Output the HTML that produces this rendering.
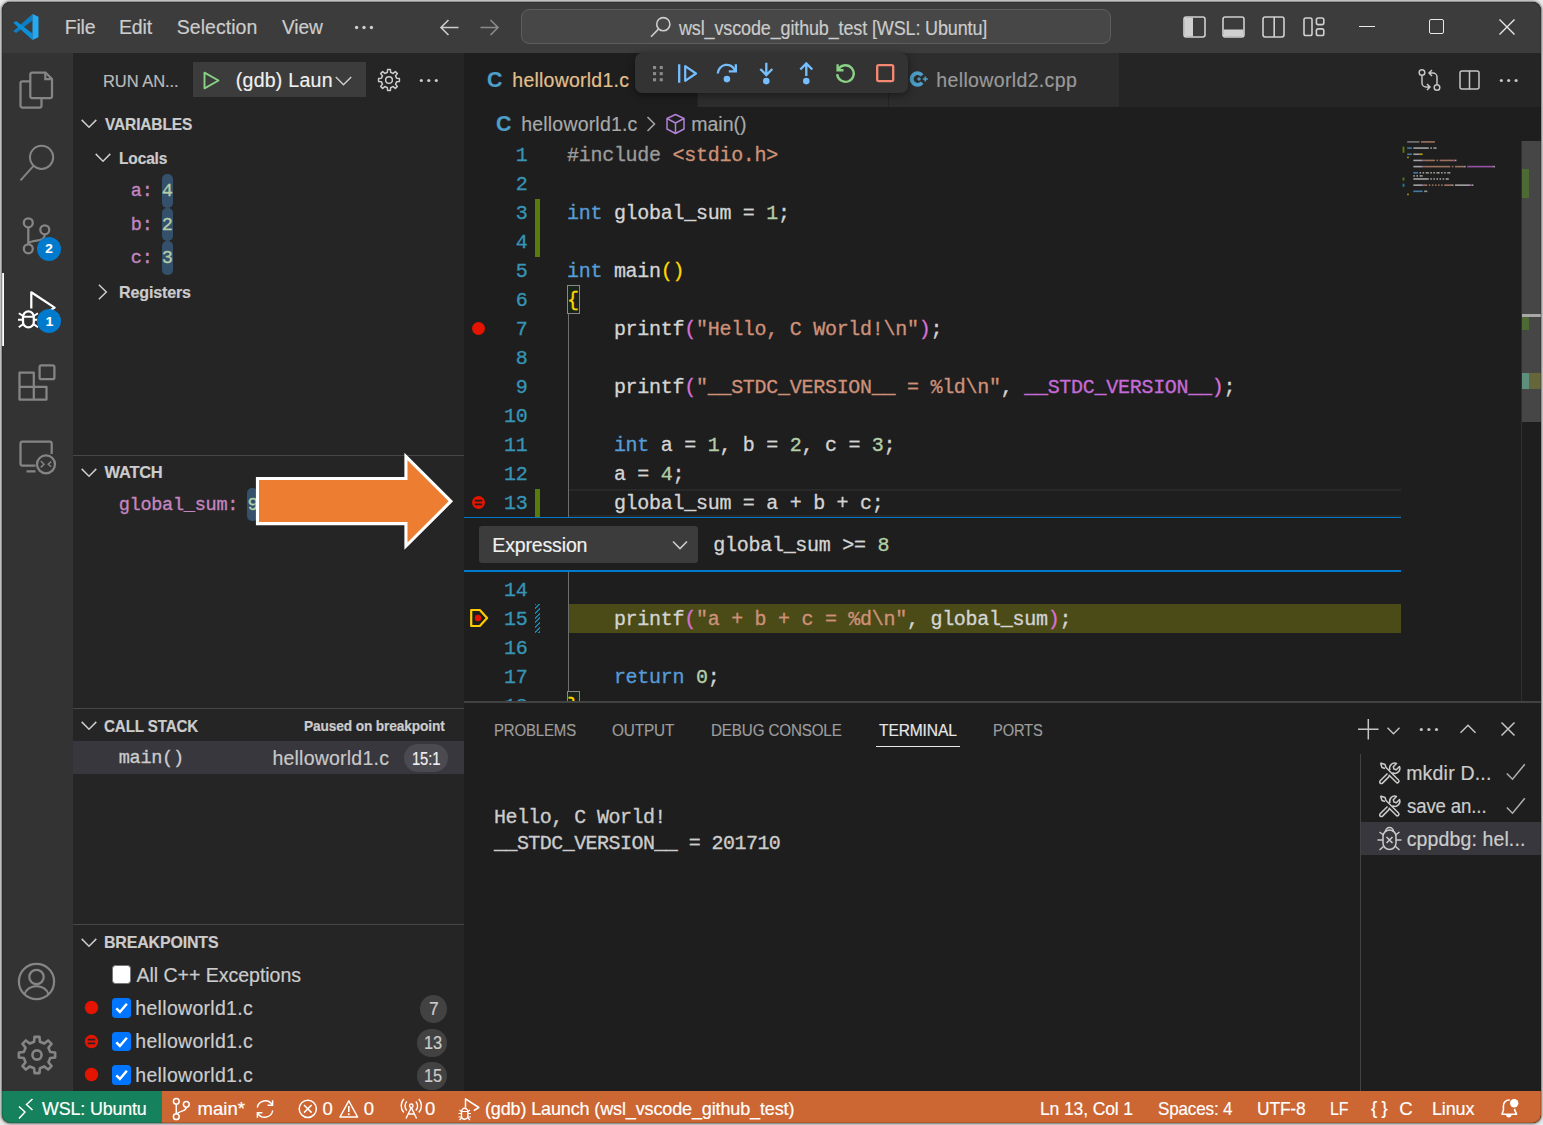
<!DOCTYPE html>
<html><head><meta charset="utf-8"><title>VS Code</title>
<style>
html,body{margin:0;padding:0;}
body{width:1543px;height:1125px;overflow:hidden;background:#e9e9e9;position:relative;font-family:'Liberation Sans', sans-serif;}
#frame{position:absolute;left:2px;top:2px;width:1539px;height:1121px;border-radius:8.5px;overflow:hidden;box-shadow:0 0 2.5px 0.5px rgba(0,0,0,0.55);background:#1e1e1e;}
#win{position:absolute;left:-2px;top:-2px;width:1543px;height:1125px;}
#edge{position:absolute;left:2px;top:2px;width:1539px;height:1121px;border-radius:8.5px;box-sizing:border-box;border:1px solid rgba(0,0,0,0.13);pointer-events:none;}
#win div,#win span,#win svg,#win pre{position:absolute;margin:0;padding:0;white-space:pre;}
#win svg{overflow:visible;}
.code{font-family:'Liberation Mono', monospace;-webkit-text-stroke:0.32px currentColor;}
#win span{-webkit-text-stroke:0.18px currentColor;}
#win .code span{-webkit-text-stroke:inherit;}
</style></head><body>
<div id="frame"><div id="win">
<div style="left:0px;top:0px;width:1543px;height:1125px;background:#1e1e1e;"></div>
<div style="left:0px;top:0px;width:1543px;height:53px;background:#3c3c3c;"></div>
<div style="left:0px;top:53px;width:73px;height:1038px;background:#333333;"></div>
<div style="left:73px;top:53px;width:390.6px;height:1038px;background:#252526;"></div>
<div style="left:464px;top:53px;width:1079px;height:53.5px;background:#252526;"></div>
<div style="left:464px;top:53px;width:232.5px;height:53.5px;background:#1e1e1e;"></div>
<div style="left:697.5px;top:53px;width:190px;height:53.5px;background:#2d2d2d;"></div>
<div style="left:888.5px;top:53px;width:230.5px;height:53.5px;background:#2d2d2d;"></div>
<div style="left:0px;top:1091.4px;width:1543px;height:33.6px;background:#cc6633;"></div>
<div style="left:0px;top:1091.4px;width:161.8px;height:33.6px;background:#16825d;"></div>
<div style="left:568px;top:488.5px;width:833px;height:28.1px;background:transparent;border-top:2px solid #282828;border-bottom:2px solid #282828;box-sizing:border-box;"></div>
<div style="left:568px;top:603.7px;width:833px;height:28.9px;background:#4b4b18;"></div>
<div style="left:567.8px;top:314px;width:1.3px;height:203px;background:#6e6e6e;"></div>
<div style="left:567.8px;top:572px;width:1.3px;height:119px;background:#6e6e6e;"></div>
<div style="left:567px;top:285px;width:12.5px;height:29px;background:rgba(0,100,0,0.1);border:1px solid #888;box-sizing:border-box;"></div>
<div style="left:567px;top:691px;width:12.5px;height:29px;background:rgba(0,100,0,0.1);border:1px solid #888;box-sizing:border-box;"></div>
<div style="left:535.3px;top:199px;width:4.5px;height:57.5px;background:#587c0c;"></div>
<div style="left:535.3px;top:488.5px;width:4.5px;height:28.5px;background:#587c0c;"></div>
<div style="left:535.3px;top:603.7px;width:4.5px;height:28.9px;background:transparent;background:repeating-linear-gradient(-45deg,#1b81a8 0,#1b81a8 1.5px,transparent 1.5px,transparent 3.3px);"></div>
<pre class="code" style="left:515.68px;top:141.30px;height:29.0px;line-height:29.0px;font-size:20.0px;letter-spacing:-0.280px;color:#3794b5">1</pre>
<pre class="code" style="left:567.0px;top:141.30px;height:29.0px;line-height:29.0px;font-size:20.0px;letter-spacing:-0.280px;color:#d4d4d4"><span style="position:static;color:#9b9b9b;-webkit-text-stroke-color:#9b9b9b">#include</span><span style="position:static;color:#d4d4d4;-webkit-text-stroke-color:#d4d4d4"> </span><span style="position:static;color:#ce9178;-webkit-text-stroke-color:#ce9178">&lt;stdio.h&gt;</span></pre>
<pre class="code" style="left:515.68px;top:170.30px;height:29.0px;line-height:29.0px;font-size:20.0px;letter-spacing:-0.280px;color:#3794b5">2</pre>
<pre class="code" style="left:515.68px;top:199.30px;height:29.0px;line-height:29.0px;font-size:20.0px;letter-spacing:-0.280px;color:#3794b5">3</pre>
<pre class="code" style="left:567.0px;top:199.30px;height:29.0px;line-height:29.0px;font-size:20.0px;letter-spacing:-0.280px;color:#d4d4d4"><span style="position:static;color:#569cd6;-webkit-text-stroke-color:#569cd6">int</span><span style="position:static;color:#d4d4d4;-webkit-text-stroke-color:#d4d4d4"> global_sum = </span><span style="position:static;color:#b5cea8;-webkit-text-stroke-color:#b5cea8">1</span><span style="position:static;color:#d4d4d4;-webkit-text-stroke-color:#d4d4d4">;</span></pre>
<pre class="code" style="left:515.68px;top:228.30px;height:29.0px;line-height:29.0px;font-size:20.0px;letter-spacing:-0.280px;color:#3794b5">4</pre>
<pre class="code" style="left:515.68px;top:257.30px;height:29.0px;line-height:29.0px;font-size:20.0px;letter-spacing:-0.280px;color:#3794b5">5</pre>
<pre class="code" style="left:567.0px;top:257.30px;height:29.0px;line-height:29.0px;font-size:20.0px;letter-spacing:-0.280px;color:#d4d4d4"><span style="position:static;color:#569cd6;-webkit-text-stroke-color:#569cd6">int</span><span style="position:static;color:#d4d4d4;-webkit-text-stroke-color:#d4d4d4"> main</span><span style="position:static;color:#ffd700;-webkit-text-stroke-color:#ffd700">()</span></pre>
<pre class="code" style="left:515.68px;top:286.30px;height:29.0px;line-height:29.0px;font-size:20.0px;letter-spacing:-0.280px;color:#3794b5">6</pre>
<pre class="code" style="left:567.0px;top:286.30px;height:29.0px;line-height:29.0px;font-size:20.0px;letter-spacing:-0.280px;color:#d4d4d4"><span style="position:static;color:#ffd700;-webkit-text-stroke-color:#ffd700">{</span></pre>
<pre class="code" style="left:515.68px;top:315.30px;height:29.0px;line-height:29.0px;font-size:20.0px;letter-spacing:-0.280px;color:#3794b5">7</pre>
<pre class="code" style="left:567.0px;top:315.30px;height:29.0px;line-height:29.0px;font-size:20.0px;letter-spacing:-0.280px;color:#d4d4d4"><span style="position:static;color:#d4d4d4;-webkit-text-stroke-color:#d4d4d4">    printf</span><span style="position:static;color:#da70d6;-webkit-text-stroke-color:#da70d6">(</span><span style="position:static;color:#ce9178;-webkit-text-stroke-color:#ce9178">&quot;Hello, C World!\n&quot;</span><span style="position:static;color:#da70d6;-webkit-text-stroke-color:#da70d6">)</span><span style="position:static;color:#d4d4d4;-webkit-text-stroke-color:#d4d4d4">;</span></pre>
<pre class="code" style="left:515.68px;top:344.30px;height:29.0px;line-height:29.0px;font-size:20.0px;letter-spacing:-0.280px;color:#3794b5">8</pre>
<pre class="code" style="left:515.68px;top:373.30px;height:29.0px;line-height:29.0px;font-size:20.0px;letter-spacing:-0.280px;color:#3794b5">9</pre>
<pre class="code" style="left:567.0px;top:373.30px;height:29.0px;line-height:29.0px;font-size:20.0px;letter-spacing:-0.280px;color:#d4d4d4"><span style="position:static;color:#d4d4d4;-webkit-text-stroke-color:#d4d4d4">    printf</span><span style="position:static;color:#da70d6;-webkit-text-stroke-color:#da70d6">(</span><span style="position:static;color:#ce9178;-webkit-text-stroke-color:#ce9178">&quot;__STDC_VERSION__ = %ld\n&quot;</span><span style="position:static;color:#d4d4d4;-webkit-text-stroke-color:#d4d4d4">, </span><span style="position:static;color:#c56bd8;-webkit-text-stroke-color:#c56bd8">__STDC_VERSION__</span><span style="position:static;color:#da70d6;-webkit-text-stroke-color:#da70d6">)</span><span style="position:static;color:#d4d4d4;-webkit-text-stroke-color:#d4d4d4">;</span></pre>
<pre class="code" style="left:503.96px;top:402.30px;height:29.0px;line-height:29.0px;font-size:20.0px;letter-spacing:-0.280px;color:#3794b5">10</pre>
<pre class="code" style="left:503.96px;top:431.30px;height:29.0px;line-height:29.0px;font-size:20.0px;letter-spacing:-0.280px;color:#3794b5">11</pre>
<pre class="code" style="left:567.0px;top:431.30px;height:29.0px;line-height:29.0px;font-size:20.0px;letter-spacing:-0.280px;color:#d4d4d4"><span style="position:static;color:#d4d4d4;-webkit-text-stroke-color:#d4d4d4">    </span><span style="position:static;color:#569cd6;-webkit-text-stroke-color:#569cd6">int</span><span style="position:static;color:#d4d4d4;-webkit-text-stroke-color:#d4d4d4"> a = </span><span style="position:static;color:#b5cea8;-webkit-text-stroke-color:#b5cea8">1</span><span style="position:static;color:#d4d4d4;-webkit-text-stroke-color:#d4d4d4">, b = </span><span style="position:static;color:#b5cea8;-webkit-text-stroke-color:#b5cea8">2</span><span style="position:static;color:#d4d4d4;-webkit-text-stroke-color:#d4d4d4">, c = </span><span style="position:static;color:#b5cea8;-webkit-text-stroke-color:#b5cea8">3</span><span style="position:static;color:#d4d4d4;-webkit-text-stroke-color:#d4d4d4">;</span></pre>
<pre class="code" style="left:503.96px;top:460.30px;height:29.0px;line-height:29.0px;font-size:20.0px;letter-spacing:-0.280px;color:#3794b5">12</pre>
<pre class="code" style="left:567.0px;top:460.30px;height:29.0px;line-height:29.0px;font-size:20.0px;letter-spacing:-0.280px;color:#d4d4d4"><span style="position:static;color:#d4d4d4;-webkit-text-stroke-color:#d4d4d4">    a = </span><span style="position:static;color:#b5cea8;-webkit-text-stroke-color:#b5cea8">4</span><span style="position:static;color:#d4d4d4;-webkit-text-stroke-color:#d4d4d4">;</span></pre>
<pre class="code" style="left:503.96px;top:489.30px;height:29.0px;line-height:29.0px;font-size:20.0px;letter-spacing:-0.280px;color:#3794b5">13</pre>
<pre class="code" style="left:567.0px;top:489.30px;height:29.0px;line-height:29.0px;font-size:20.0px;letter-spacing:-0.280px;color:#d4d4d4"><span style="position:static;color:#d4d4d4;-webkit-text-stroke-color:#d4d4d4">    global_sum = a + b + c;</span></pre>
<pre class="code" style="left:503.96px;top:575.80px;height:29.0px;line-height:29.0px;font-size:20.0px;letter-spacing:-0.280px;color:#3794b5">14</pre>
<pre class="code" style="left:503.96px;top:604.80px;height:29.0px;line-height:29.0px;font-size:20.0px;letter-spacing:-0.280px;color:#3794b5">15</pre>
<pre class="code" style="left:567.0px;top:604.80px;height:29.0px;line-height:29.0px;font-size:20.0px;letter-spacing:-0.280px;color:#d4d4d4"><span style="position:static;color:#d4d4d4;-webkit-text-stroke-color:#d4d4d4">    printf</span><span style="position:static;color:#da70d6;-webkit-text-stroke-color:#da70d6">(</span><span style="position:static;color:#ce9178;-webkit-text-stroke-color:#ce9178">&quot;a + b + c = %d\n&quot;</span><span style="position:static;color:#d4d4d4;-webkit-text-stroke-color:#d4d4d4">, global_sum</span><span style="position:static;color:#da70d6;-webkit-text-stroke-color:#da70d6">)</span><span style="position:static;color:#d4d4d4;-webkit-text-stroke-color:#d4d4d4">;</span></pre>
<pre class="code" style="left:503.96px;top:633.80px;height:29.0px;line-height:29.0px;font-size:20.0px;letter-spacing:-0.280px;color:#3794b5">16</pre>
<pre class="code" style="left:503.96px;top:662.80px;height:29.0px;line-height:29.0px;font-size:20.0px;letter-spacing:-0.280px;color:#3794b5">17</pre>
<pre class="code" style="left:567.0px;top:662.80px;height:29.0px;line-height:29.0px;font-size:20.0px;letter-spacing:-0.280px;color:#d4d4d4"><span style="position:static;color:#d4d4d4;-webkit-text-stroke-color:#d4d4d4">    </span><span style="position:static;color:#569cd6;-webkit-text-stroke-color:#569cd6">return</span><span style="position:static;color:#d4d4d4;-webkit-text-stroke-color:#d4d4d4"> </span><span style="position:static;color:#b5cea8;-webkit-text-stroke-color:#b5cea8">0</span><span style="position:static;color:#d4d4d4;-webkit-text-stroke-color:#d4d4d4">;</span></pre>
<pre class="code" style="left:503.96px;top:691.80px;height:29.0px;line-height:29.0px;font-size:20.0px;letter-spacing:-0.280px;color:#3794b5">18</pre>
<pre class="code" style="left:567.0px;top:691.80px;height:29.0px;line-height:29.0px;font-size:20.0px;letter-spacing:-0.280px;color:#d4d4d4"><span style="position:static;color:#ffd700;-webkit-text-stroke-color:#ffd700">}</span></pre>
<svg style="left:471px;top:321px;" width="15" height="15" viewBox="0 0 15 15" fill="none"><circle cx="7.5" cy="7.5" r="6.5" fill="#e51400"/></svg>
<svg style="left:471px;top:495px;" width="15" height="15" viewBox="0 0 15 15" fill="none"><circle cx="7.5" cy="7.5" r="6.5" fill="#e51400"/><path d="M3.8 5.6h7.4M3.8 9.4h7.4" stroke="#1e1e1e" stroke-width="1.9"/></svg>
<svg style="left:469px;top:608px;" width="21" height="21" viewBox="0 0 21 21" fill="none"><path d="M2.200 2h8.600l7.300 8-7.300 8H2.200z" stroke="#ffcc00" stroke-width="2.200" stroke-linejoin="round"/><circle cx="9" cy="10" r="3.200" fill="#e51400"/></svg>
<div style="left:464px;top:517px;width:937px;height:54px;background:#1e1e1e;"></div>
<div style="left:464px;top:516.6px;width:937px;height:1.6px;background:#007acc;"></div>
<div style="left:464px;top:570px;width:937px;height:1.6px;background:#007acc;"></div>
<div style="left:479px;top:526.2px;width:219px;height:36.4px;background:#3c3c3c;border-radius:3px;"></div>
<span style="left:492.27px;top:532.30px;height:27px;line-height:27px;font-family:'Liberation Sans', sans-serif;font-size:19.5px;font-weight:400;color:#f0f0f0;letter-spacing:-0.140px;">Expression</span>
<svg style="left:672px;top:540px;" width="16" height="10" viewBox="0 0 16 10" fill="none"><path d="M1 1.5l7 7 7-7" stroke="#cccccc" stroke-width="1.6"/></svg>
<pre class="code" style="left:713.3px;top:530.6px;height:29.0px;line-height:29.0px;font-size:20.0px;letter-spacing:-0.280px;color:#d4d4d4">global_sum &gt;= <span style="position:static;color:#b5cea8;-webkit-text-stroke-color:#b5cea8">8</span></pre>
<div style="left:464px;top:701px;width:1079px;height:390px;background:#1e1e1e;"></div>
<div style="left:464px;top:701px;width:1079px;height:1.5px;background:#424242;"></div>
<span style="left:64.77px;top:14.00px;height:27px;line-height:27px;font-family:'Liberation Sans', sans-serif;font-size:19.5px;font-weight:400;color:#cccccc;letter-spacing:-0.225px;">File</span>
<span style="left:118.97px;top:14.00px;height:27px;line-height:27px;font-family:'Liberation Sans', sans-serif;font-size:19.5px;font-weight:400;color:#cccccc;letter-spacing:-0.122px;">Edit</span>
<span style="left:176.71px;top:14.00px;height:27px;line-height:27px;font-family:'Liberation Sans', sans-serif;font-size:19.5px;font-weight:400;color:#cccccc;letter-spacing:0.051px;">Selection</span>
<span style="left:281.51px;top:14.00px;height:27px;line-height:27px;font-family:'Liberation Sans', sans-serif;font-size:19.5px;font-weight:400;color:#cccccc;letter-spacing:-0.150px;transform:scaleX(0.9833);transform-origin:0 50%;">View</span>
<svg style="left:354px;top:25px;" width="20" height="5" viewBox="0 0 20 5" fill="none"><circle cx="2.6" cy="2.5" r="1.7" fill="#ccc"/><circle cx="10" cy="2.5" r="1.7" fill="#ccc"/><circle cx="17.4" cy="2.5" r="1.7" fill="#ccc"/></svg>
<svg style="left:439px;top:18px;" width="21" height="19" viewBox="0 0 21 19" fill="none"><path d="M19.5 9.5H2M9.5 2L2 9.5l7.5 7.5" stroke="#cccccc" stroke-width="1.6"/></svg>
<svg style="left:479px;top:18px;" width="21" height="19" viewBox="0 0 21 19" fill="none"><path d="M1.5 9.5H19M11.5 2l7.5 7.5-7.5 7.5" stroke="#8a8a8a" stroke-width="1.6"/></svg>
<div style="left:521px;top:8.8px;width:589.5px;height:35.4px;background:#474747;border:1px solid #5e5e5e;border-radius:8px;box-sizing:border-box;"></div>
<svg style="left:650px;top:16px;" width="22" height="22" viewBox="0 0 22 22" fill="none"><circle cx="13.3" cy="8.2" r="6.6" stroke="#cccccc" stroke-width="1.6"/><path d="M8.7 12.9L1 20.8" stroke="#cccccc" stroke-width="1.6"/></svg>
<span style="left:678.66px;top:14.70px;height:27px;line-height:27px;font-family:'Liberation Sans', sans-serif;font-size:19.5px;font-weight:400;color:#cccccc;letter-spacing:-0.150px;transform:scaleX(0.9231);transform-origin:0 50%;">wsl_vscode_github_test [WSL: Ubuntu]</span>
<svg style="left:1182.5px;top:16px;" width="23" height="22" viewBox="0 0 23 22" fill="none"><rect x="1" y="1" width="21" height="20" rx="2.2" stroke="#d0d0d0" stroke-width="1.6"/><path d="M1.5 1.5h8.5v19H1.5z" fill="#d0d0d0"/></svg>
<svg style="left:1221.7px;top:16px;" width="23" height="22" viewBox="0 0 23 22" fill="none"><rect x="1" y="1" width="21" height="20" rx="2.2" stroke="#d0d0d0" stroke-width="1.6"/><path d="M1.5 13.5h20v7h-20z" fill="#d0d0d0"/></svg>
<svg style="left:1261.5px;top:16px;" width="23" height="22" viewBox="0 0 23 22" fill="none"><rect x="1" y="1" width="21" height="20" rx="2.2" stroke="#d0d0d0" stroke-width="1.6"/><path d="M12.2 1v20" stroke="#d0d0d0" stroke-width="1.6"/></svg>
<svg style="left:1302.5px;top:17px;" width="22" height="20" viewBox="0 0 22 20" fill="none"><rect x="1" y="1" width="8" height="17.5" rx="1.8" stroke="#d0d0d0" stroke-width="1.6"/><rect x="13.4" y="1" width="7.4" height="6.6" rx="1.8" stroke="#d0d0d0" stroke-width="1.6"/><rect x="13.4" y="11.9" width="7.4" height="6.6" rx="1.8" stroke="#d0d0d0" stroke-width="1.6"/></svg>
<div style="left:1359.3px;top:25.6px;width:15.4px;height:1.4px;background:#e8e8e8;"></div>
<div style="left:1428.6px;top:19.4px;width:15.2px;height:14.8px;background:transparent;border:1.4px solid #e8e8e8;border-radius:2px;box-sizing:border-box;"></div>
<svg style="left:1498.6px;top:19px;" width="16" height="16" viewBox="0 0 16 16" fill="none"><path d="M0.5 0.5l15 15M15.5 0.5l-15 15" stroke="#e8e8e8" stroke-width="1.4"/></svg>
<span style="left:487.02px;top:64.60px;height:30px;line-height:30px;font-family:'Liberation Sans', sans-serif;font-size:21.3px;font-weight:700;color:#4d9fc8;letter-spacing:0.000px;">C</span>
<span style="left:512.35px;top:67.30px;height:27px;line-height:27px;font-family:'Liberation Sans', sans-serif;font-size:19.5px;font-weight:400;color:#e2c08d;letter-spacing:0.228px;">helloworld1.c</span>
<span style="left:936.35px;top:67.30px;height:27px;line-height:27px;font-family:'Liberation Sans', sans-serif;font-size:19.5px;font-weight:400;color:#9a9a9a;letter-spacing:0.351px;">helloworld2.cpp</span>
<svg style="left:909px;top:70px;" width="20" height="18" viewBox="0 0 20 18" fill="none"><path d="M13.100 5.400A5.850 5.850 0 1 0 13.100 12.600" stroke="#4d9fc8" stroke-width="3.900"/><path d="M8.300 9h3.400M10 7.300v3.400" stroke="#4d9fc8" stroke-width="1.300"/><path d="M13.800 9h5M16.300 6.500v5" stroke="#4d9fc8" stroke-width="1.600"/></svg>
<span style="left:496.02px;top:108.50px;height:30px;line-height:30px;font-family:'Liberation Sans', sans-serif;font-size:21.3px;font-weight:700;color:#4d9fc8;letter-spacing:0.000px;">C</span>
<span style="left:521.25px;top:110.50px;height:27px;line-height:27px;font-family:'Liberation Sans', sans-serif;font-size:19.5px;font-weight:400;color:#a9a9a9;letter-spacing:0.187px;">helloworld1.c</span>
<svg style="left:645.5px;top:116px;" width="10" height="16" viewBox="0 0 10 16" fill="none"><path d="M1.5 1l7 7-7 7" stroke="#a9a9a9" stroke-width="1.5"/></svg>
<svg style="left:664.5px;top:113px;" width="21" height="22" viewBox="0 0 21 22" fill="none"><path d="M10.5 1.5l8.5 4v10.5l-8.5 4.5-8.5-4.5V5.5z M2 5.5l8.500 4.5 8.500-4.500 M10.5 10v10.5" stroke="#b180d7" stroke-width="1.5" stroke-linejoin="round"/></svg>
<span style="left:691.18px;top:110.50px;height:27px;line-height:27px;font-family:'Liberation Sans', sans-serif;font-size:19.5px;font-weight:400;color:#a9a9a9;letter-spacing:0.020px;">main()</span>
<svg style="left:1418px;top:68px;" width="23" height="24" viewBox="0 0 23 24" fill="none"><circle cx="4" cy="4.500" r="2.8" stroke="#c5c5c5" stroke-width="1.5"/><circle cx="19" cy="19.5" r="2.8" stroke="#c5c5c5" stroke-width="1.5"/><path d="M4 7.500v7.500a4 4 0 0 0 4 4h3.500M9 16l3 3-3 3M19 16.500V9a4 4 0 0 0-4-4h-3.500M14 8l-3-3 3-3" stroke="#c5c5c5" stroke-width="1.5"/></svg>
<svg style="left:1459px;top:70px;" width="21" height="20" viewBox="0 0 21 20" fill="none"><rect x="1" y="1" width="19" height="18" rx="2" stroke="#c5c5c5" stroke-width="1.5"/><path d="M10.5 1v18" stroke="#c5c5c5" stroke-width="1.5"/></svg>
<svg style="left:1498.5px;top:78px;" width="20" height="5" viewBox="0 0 20 5" fill="none"><circle cx="2.300" cy="2.500" r="1.6" fill="#c5c5c5"/><circle cx="9.7" cy="2.500" r="1.6" fill="#c5c5c5"/><circle cx="17.100" cy="2.500" r="1.6" fill="#c5c5c5"/></svg>
<span style="left:493.57px;top:718.50px;height:23px;line-height:23px;font-family:'Liberation Sans', sans-serif;font-size:16.5px;font-weight:400;color:#9d9d9d;letter-spacing:-0.150px;transform:scaleX(0.9064);transform-origin:0 50%;">PROBLEMS</span>
<span style="left:612.33px;top:718.50px;height:23px;line-height:23px;font-family:'Liberation Sans', sans-serif;font-size:16.5px;font-weight:400;color:#9d9d9d;letter-spacing:-0.150px;transform:scaleX(0.9284);transform-origin:0 50%;">OUTPUT</span>
<span style="left:711.26px;top:718.50px;height:23px;line-height:23px;font-family:'Liberation Sans', sans-serif;font-size:16.5px;font-weight:400;color:#9d9d9d;letter-spacing:-0.150px;transform:scaleX(0.9202);transform-origin:0 50%;">DEBUG CONSOLE</span>
<span style="left:879.36px;top:718.50px;height:23px;line-height:23px;font-family:'Liberation Sans', sans-serif;font-size:16.5px;font-weight:400;color:#e7e7e7;letter-spacing:-0.150px;transform:scaleX(0.9451);transform-origin:0 50%;">TERMINAL</span>
<span style="left:992.80px;top:718.50px;height:23px;line-height:23px;font-family:'Liberation Sans', sans-serif;font-size:16.5px;font-weight:400;color:#9d9d9d;letter-spacing:-0.150px;transform:scaleX(0.8874);transform-origin:0 50%;">PORTS</span>
<div style="left:876.1px;top:745.6px;width:83.6px;height:1.6px;background:#e7e7e7;"></div>
<pre class="code" style="left:494px;top:805.4px;height:25.3px;line-height:25.3px;font-size:20.0px;letter-spacing:-0.550px;color:#cccccc">Hello, C World!
__STDC_VERSION__ = 201710</pre>
<svg style="left:1358px;top:718.7px;" width="21" height="21" viewBox="0 0 21 21" fill="none"><path d="M10.300 0v20.500M0 10.200h20.500" stroke="#c5c5c5" stroke-width="1.5"/></svg>
<svg style="left:1387.3px;top:726.5px;" width="13" height="8" viewBox="0 0 13 8" fill="none"><path d="M0.500 0.700l6 6 6-6" stroke="#c5c5c5" stroke-width="1.4"/></svg>
<svg style="left:1418.6px;top:726.7px;" width="20" height="5" viewBox="0 0 20 5" fill="none"><circle cx="2.300" cy="2.500" r="1.6" fill="#c5c5c5"/><circle cx="9.900" cy="2.500" r="1.6" fill="#c5c5c5"/><circle cx="17.500" cy="2.500" r="1.6" fill="#c5c5c5"/></svg>
<svg style="left:1460.3px;top:723.5px;" width="16" height="10" viewBox="0 0 16 10" fill="none"><path d="M0.500 8.800l7.500-7.500 7.500 7.500" stroke="#c5c5c5" stroke-width="1.5"/></svg>
<svg style="left:1501px;top:722.3px;" width="14" height="14" viewBox="0 0 14 14" fill="none"><path d="M0.500 0.500l13 13M13.500 0.500l-13 13" stroke="#c5c5c5" stroke-width="1.5"/></svg>
<div style="left:1360.4px;top:754.4px;width:1px;height:336.6px;background:#424242;"></div>
<div style="left:1361.4px;top:822px;width:181.6px;height:33px;background:#37373d;"></div>
<span style="left:1406.18px;top:759.50px;height:27px;line-height:27px;font-family:'Liberation Sans', sans-serif;font-size:19.5px;font-weight:400;color:#cccccc;letter-spacing:0.197px;">mkdir D...</span>
<span style="left:1406.84px;top:793.10px;height:27px;line-height:27px;font-family:'Liberation Sans', sans-serif;font-size:19.5px;font-weight:400;color:#cccccc;letter-spacing:-0.150px;transform:scaleX(0.9566);transform-origin:0 50%;">save an...</span>
<span style="left:1406.75px;top:826.30px;height:27px;line-height:27px;font-family:'Liberation Sans', sans-serif;font-size:19.5px;font-weight:400;color:#cccccc;letter-spacing:0.117px;">cppdbg: hel...</span>
<span style="left:42.28px;top:1096.10px;height:26px;line-height:26px;font-family:'Liberation Sans', sans-serif;font-size:18.5px;font-weight:400;color:#ffffff;letter-spacing:-0.150px;transform:scaleX(0.9651);transform-origin:0 50%;">WSL: Ubuntu</span>
<span style="left:197.45px;top:1096.10px;height:26px;line-height:26px;font-family:'Liberation Sans', sans-serif;font-size:18.5px;font-weight:400;color:#ffffff;letter-spacing:0.062px;">main*</span>
<span style="left:322.41px;top:1096.10px;height:26px;line-height:26px;font-family:'Liberation Sans', sans-serif;font-size:18.5px;font-weight:400;color:#ffffff;letter-spacing:0.000px;">0</span>
<span style="left:363.81px;top:1096.10px;height:26px;line-height:26px;font-family:'Liberation Sans', sans-serif;font-size:18.5px;font-weight:400;color:#ffffff;letter-spacing:0.000px;">0</span>
<span style="left:425.01px;top:1096.10px;height:26px;line-height:26px;font-family:'Liberation Sans', sans-serif;font-size:18.5px;font-weight:400;color:#ffffff;letter-spacing:0.000px;">0</span>
<span style="left:485.33px;top:1096.10px;height:26px;line-height:26px;font-family:'Liberation Sans', sans-serif;font-size:18.5px;font-weight:400;color:#ffffff;letter-spacing:-0.150px;transform:scaleX(0.9745);transform-origin:0 50%;">(gdb) Launch (wsl_vscode_github_test)</span>
<span style="left:1040.10px;top:1096.10px;height:26px;line-height:26px;font-family:'Liberation Sans', sans-serif;font-size:18.5px;font-weight:400;color:#ffffff;letter-spacing:-0.150px;transform:scaleX(0.9486);transform-origin:0 50%;">Ln 13, Col 1</span>
<span style="left:1158.44px;top:1096.10px;height:26px;line-height:26px;font-family:'Liberation Sans', sans-serif;font-size:18.5px;font-weight:400;color:#ffffff;letter-spacing:-0.150px;transform:scaleX(0.9197);transform-origin:0 50%;">Spaces: 4</span>
<span style="left:1257.17px;top:1096.10px;height:26px;line-height:26px;font-family:'Liberation Sans', sans-serif;font-size:18.5px;font-weight:400;color:#ffffff;letter-spacing:-0.150px;transform:scaleX(0.9396);transform-origin:0 50%;">UTF-8</span>
<span style="left:1330.03px;top:1096.10px;height:26px;line-height:26px;font-family:'Liberation Sans', sans-serif;font-size:18.5px;font-weight:400;color:#ffffff;letter-spacing:-0.150px;transform:scaleX(0.8578);transform-origin:0 50%;">LF</span>
<span style="left:1370.98px;top:1094.50px;height:26px;line-height:26px;font-family:'Liberation Sans', sans-serif;font-size:18.5px;font-weight:400;color:#ffffff;letter-spacing:4.231px;">{}</span>
<span style="left:1399.36px;top:1096.10px;height:26px;line-height:26px;font-family:'Liberation Sans', sans-serif;font-size:18.5px;font-weight:400;color:#ffffff;letter-spacing:0.000px;">C</span>
<span style="left:1431.96px;top:1096.10px;height:26px;line-height:26px;font-family:'Liberation Sans', sans-serif;font-size:18.5px;font-weight:400;color:#ffffff;letter-spacing:-0.150px;transform:scaleX(0.9709);transform-origin:0 50%;">Linux</span>
<span style="left:102.95px;top:69.70px;height:23px;line-height:23px;font-family:'Liberation Sans', sans-serif;font-size:16.5px;font-weight:400;color:#bbbbbb;letter-spacing:-0.043px;">RUN AN...</span>
<div style="left:193.3px;top:62.3px;width:172.7px;height:35.2px;background:#3c3c3c;"></div>
<svg style="left:203px;top:71px;" width="17" height="19" viewBox="0 0 17 19" fill="none"><path d="M1.500 1.700v15.600l14-7.800z" stroke="#89d185" stroke-width="1.9" stroke-linejoin="round"/></svg>
<span style="left:235.78px;top:67.30px;height:27px;line-height:27px;font-family:'Liberation Sans', sans-serif;font-size:19.5px;font-weight:400;color:#f0f0f0;letter-spacing:0.270px;">(gdb) Laun</span>
<svg style="left:335px;top:75.5px;" width="17" height="11" viewBox="0 0 17 11" fill="none"><path d="M0.800 1l7.700 7.800 7.700-7.800" stroke="#cccccc" stroke-width="1.5"/></svg>
<svg style="left:377px;top:68px;" width="24" height="24" viewBox="0 0 24 24" fill="none"><path d="M10.31 4.42 L10.60 1.59 L13.40 1.59 L13.69 4.42 L16.16 5.44 L18.37 3.65 L20.35 5.63 L18.56 7.84 L19.58 10.31 L22.41 10.60 L22.41 13.40 L19.58 13.69 L18.56 16.16 L20.35 18.37 L18.37 20.35 L16.16 18.56 L13.69 19.58 L13.40 22.41 L10.60 22.41 L10.31 19.58 L7.84 18.56 L5.63 20.35 L3.65 18.37 L5.44 16.16 L4.42 13.69 L1.59 13.40 L1.59 10.60 L4.42 10.31 L5.44 7.84 L3.65 5.63 L5.63 3.65 L7.84 5.44Z" stroke="#cccccc" stroke-width="1.5" stroke-linejoin="round"/><circle cx="12" cy="12" r="3.36" stroke="#cccccc" stroke-width="1.5"/></svg>
<svg style="left:419px;top:77.5px;" width="20" height="5" viewBox="0 0 20 5" fill="none"><circle cx="2.300" cy="2.500" r="1.600" fill="#ccc"/><circle cx="9.800" cy="2.500" r="1.600" fill="#ccc"/><circle cx="17.300" cy="2.500" r="1.600" fill="#ccc"/></svg>
<svg style="left:81px;top:119px;" width="16" height="10" viewBox="0 0 16 10" fill="none"><path d="M0.700 0.900l7.300 7.400 7.300-7.400" stroke="#cccccc" stroke-width="1.500"/></svg>
<span style="left:104.53px;top:113.10px;height:23px;line-height:23px;font-family:'Liberation Sans', sans-serif;font-size:16.5px;font-weight:700;color:#cccccc;letter-spacing:-0.150px;transform:scaleX(0.9393);transform-origin:0 50%;">VARIABLES</span>
<svg style="left:94.5px;top:153px;" width="16" height="10" viewBox="0 0 16 10" fill="none"><path d="M0.700 0.900l7.300 7.400 7.300-7.400" stroke="#cccccc" stroke-width="1.500"/></svg>
<span style="left:118.91px;top:147.00px;height:23px;line-height:23px;font-family:'Liberation Sans', sans-serif;font-size:16.5px;font-weight:700;color:#cccccc;letter-spacing:-0.150px;transform:scaleX(0.9396);transform-origin:0 50%;">Locals</span>
<div style="left:161.52px;top:174px;width:11.26px;height:33.5px;background:#34506b;border-radius:5px;"></div>
<pre class="code" style="left:130.8px;top:178.40px;height:27px;line-height:27px;font-size:18.6px;letter-spacing:-0.300px;color:#c586c0">a:</pre>
<pre class="code" style="left:161.82000000000002px;top:178.40px;height:27px;line-height:27px;font-size:18.6px;letter-spacing:-0.300px;color:#b5cea8">4</pre>
<div style="left:161.52px;top:207.5px;width:11.26px;height:33.5px;background:#34506b;border-radius:5px;"></div>
<pre class="code" style="left:130.8px;top:211.90px;height:27px;line-height:27px;font-size:18.6px;letter-spacing:-0.300px;color:#c586c0">b:</pre>
<pre class="code" style="left:161.82000000000002px;top:211.90px;height:27px;line-height:27px;font-size:18.6px;letter-spacing:-0.300px;color:#b5cea8">2</pre>
<div style="left:161.52px;top:241px;width:11.26px;height:33.5px;background:#34506b;border-radius:5px;"></div>
<pre class="code" style="left:130.8px;top:245.40px;height:27px;line-height:27px;font-size:18.6px;letter-spacing:-0.300px;color:#c586c0">c:</pre>
<pre class="code" style="left:161.82000000000002px;top:245.40px;height:27px;line-height:27px;font-size:18.6px;letter-spacing:-0.300px;color:#b5cea8">3</pre>
<svg style="left:98px;top:283.5px;" width="10" height="16" viewBox="0 0 10 16" fill="none"><path d="M0.900 0.700l7.400 7.300-7.400 7.300" stroke="#cccccc" stroke-width="1.500"/></svg>
<span style="left:118.87px;top:281.00px;height:23px;line-height:23px;font-family:'Liberation Sans', sans-serif;font-size:16.5px;font-weight:700;color:#cccccc;letter-spacing:-0.150px;transform:scaleX(0.9730);transform-origin:0 50%;">Registers</span>
<div style="left:73px;top:454.5px;width:391px;height:1px;background:#474747;"></div>
<svg style="left:81px;top:467.5px;" width="16" height="10" viewBox="0 0 16 10" fill="none"><path d="M0.700 0.900l7.300 7.400 7.300-7.400" stroke="#cccccc" stroke-width="1.500"/></svg>
<span style="left:104.62px;top:461.30px;height:23px;line-height:23px;font-family:'Liberation Sans', sans-serif;font-size:16.5px;font-weight:700;color:#cccccc;letter-spacing:-0.292px;">WATCH</span>
<div style="left:247.16px;top:487.8px;width:11.26px;height:33.5px;background:#34506b;border-radius:5px;"></div>
<pre class="code" style="left:118.7px;top:492.20px;height:27px;line-height:27px;font-size:18.6px;letter-spacing:-0.300px;color:#c586c0">global_sum:</pre>
<pre class="code" style="left:247.46px;top:492.20px;height:27px;line-height:27px;font-size:18.6px;letter-spacing:-0.300px;color:#b5cea8">9</pre>
<div style="left:73px;top:707.8px;width:391px;height:1px;background:#474747;"></div>
<svg style="left:81px;top:721px;" width="16" height="10" viewBox="0 0 16 10" fill="none"><path d="M0.700 0.900l7.300 7.400 7.300-7.400" stroke="#cccccc" stroke-width="1.500"/></svg>
<span style="left:104.20px;top:715.10px;height:23px;line-height:23px;font-family:'Liberation Sans', sans-serif;font-size:16.5px;font-weight:700;color:#cccccc;letter-spacing:-0.150px;transform:scaleX(0.9190);transform-origin:0 50%;">CALL STACK</span>
<span style="left:304.19px;top:715.50px;height:21px;line-height:21px;font-family:'Liberation Sans', sans-serif;font-size:14.8px;font-weight:700;color:#cccccc;letter-spacing:-0.150px;transform:scaleX(0.9274);transform-origin:0 50%;">Paused on breakpoint</span>
<div style="left:73px;top:741px;width:391px;height:33px;background:#37373d;"></div>
<pre class="code" style="left:118.7px;top:745.00px;height:27px;line-height:27px;font-size:18.6px;letter-spacing:-0.300px;color:#cccccc">main()</pre>
<span style="left:272.45px;top:744.50px;height:27px;line-height:27px;font-family:'Liberation Sans', sans-serif;font-size:19.5px;font-weight:400;color:#c8c8c8;letter-spacing:0.220px;">helloworld1.c</span>
<div style="left:404px;top:744.3px;width:43.5px;height:27.8px;background:#4a4a50;border-radius:14px;"></div>
<span style="left:411.59px;top:746.50px;height:24px;line-height:24px;font-family:'Liberation Sans', sans-serif;font-size:17.5px;font-weight:400;color:#f0f0f0;letter-spacing:-0.150px;transform:scaleX(0.8432);transform-origin:0 50%;">15:1</span>
<div style="left:73px;top:924px;width:391px;height:1px;background:#474747;"></div>
<svg style="left:81px;top:937.5px;" width="16" height="10" viewBox="0 0 16 10" fill="none"><path d="M0.700 0.900l7.300 7.400 7.300-7.400" stroke="#cccccc" stroke-width="1.500"/></svg>
<span style="left:103.68px;top:931.00px;height:23px;line-height:23px;font-family:'Liberation Sans', sans-serif;font-size:16.5px;font-weight:700;color:#cccccc;letter-spacing:-0.150px;transform:scaleX(0.9656);transform-origin:0 50%;">BREAKPOINTS</span>
<div style="left:111.6px;top:964.8px;width:19.4px;height:19.4px;background:#ffffff;border:1.300px solid #767676;border-radius:3.5px;box-sizing:border-box;"></div>
<span style="left:136.45px;top:961.50px;height:27px;line-height:27px;font-family:'Liberation Sans', sans-serif;font-size:19.5px;font-weight:400;color:#cccccc;letter-spacing:-0.009px;">All C++ Exceptions</span>
<svg style="left:83.6px;top:1000.1px;" width="15" height="15" viewBox="0 0 15 15" fill="none"><circle cx="7.500" cy="7.500" r="6.700" fill="#e51400"/></svg>
<div style="left:111.6px;top:998px;width:19.4px;height:19.6px;background:#0075ff;border-radius:3.500px;"></div>
<svg style="left:111.6px;top:998px;" width="19.4" height="19.6" viewBox="0 0 19.4 19.6" fill="none"><path d="M4.300 10.300l3.600 3.700 7-8.200" stroke="#ffffff" stroke-width="2.500"/></svg>
<span style="left:135.35px;top:994.80px;height:27px;line-height:27px;font-family:'Liberation Sans', sans-serif;font-size:19.5px;font-weight:400;color:#cccccc;letter-spacing:0.295px;">helloworld1.c</span>
<div style="left:419.7px;top:995.4px;width:27.8px;height:27.8px;background:#424242;border-radius:14px;"></div>
<span style="left:429.02px;top:997.30px;height:24px;line-height:24px;font-family:'Liberation Sans', sans-serif;font-size:17.5px;font-weight:400;color:#cccccc;letter-spacing:0.000px;">7</span>
<svg style="left:83.6px;top:1033.6px;" width="15" height="15" viewBox="0 0 15 15" fill="none"><circle cx="7.500" cy="7.500" r="6.700" fill="#e51400"/><path d="M3.800 5.600h7.400M3.800 9.400h7.400" stroke="#252526" stroke-width="1.900"/></svg>
<div style="left:111.6px;top:1031.5px;width:19.4px;height:19.6px;background:#0075ff;border-radius:3.500px;"></div>
<svg style="left:111.6px;top:1031.5px;" width="19.4" height="19.6" viewBox="0 0 19.4 19.6" fill="none"><path d="M4.300 10.300l3.600 3.700 7-8.200" stroke="#ffffff" stroke-width="2.500"/></svg>
<span style="left:135.35px;top:1028.30px;height:27px;line-height:27px;font-family:'Liberation Sans', sans-serif;font-size:19.5px;font-weight:400;color:#cccccc;letter-spacing:0.295px;">helloworld1.c</span>
<div style="left:416.7px;top:1028.9px;width:30.8px;height:27.8px;background:#424242;border-radius:14px;"></div>
<span style="left:423.56px;top:1030.80px;height:24px;line-height:24px;font-family:'Liberation Sans', sans-serif;font-size:17.5px;font-weight:400;color:#cccccc;letter-spacing:-0.150px;transform:scaleX(0.9359);transform-origin:0 50%;">13</span>
<svg style="left:83.6px;top:1067.1px;" width="15" height="15" viewBox="0 0 15 15" fill="none"><circle cx="7.500" cy="7.500" r="6.700" fill="#e51400"/></svg>
<div style="left:111.6px;top:1065px;width:19.4px;height:19.6px;background:#0075ff;border-radius:3.500px;"></div>
<svg style="left:111.6px;top:1065px;" width="19.4" height="19.6" viewBox="0 0 19.4 19.6" fill="none"><path d="M4.300 10.300l3.600 3.700 7-8.200" stroke="#ffffff" stroke-width="2.500"/></svg>
<span style="left:135.35px;top:1061.80px;height:27px;line-height:27px;font-family:'Liberation Sans', sans-serif;font-size:19.5px;font-weight:400;color:#cccccc;letter-spacing:0.295px;">helloworld1.c</span>
<div style="left:416.7px;top:1062.4px;width:30.8px;height:27.8px;background:#424242;border-radius:14px;"></div>
<span style="left:423.56px;top:1064.30px;height:24px;line-height:24px;font-family:'Liberation Sans', sans-serif;font-size:17.5px;font-weight:400;color:#cccccc;letter-spacing:-0.150px;transform:scaleX(0.9349);transform-origin:0 50%;">15</span>
<svg style="left:250px;top:448px;z-index:20" width="210" height="108" viewBox="250 448 210 108"><path d="M255.900 476.900H404.400V452.800L453.100 501.300 404.400 549.800V525.200H255.900Z" fill="#ffffff"/><path d="M259 480H407.500V460.200L448.700 501.300 407.500 542.400V522.100H259Z" fill="#ed7d31"/></svg>
<div style="left:635.3px;top:52.8px;width:272.9px;height:40.1px;background:#333333;border-radius:7px;box-shadow:0 2px 8px rgba(0,0,0,0.45);z-index:10;"></div>
<svg style="left:653px;top:65.6px;z-index:11;" width="10" height="16" viewBox="0 0 10 16" fill="none"><rect x="0" y="0" width="3.100" height="3.100" fill="#8b8b8b"/><rect x="0" y="6.1" width="3.100" height="3.100" fill="#8b8b8b"/><rect x="0" y="12.2" width="3.100" height="3.100" fill="#8b8b8b"/><rect x="6.7" y="0" width="3.100" height="3.100" fill="#8b8b8b"/><rect x="6.7" y="6.1" width="3.100" height="3.100" fill="#8b8b8b"/><rect x="6.7" y="12.2" width="3.100" height="3.100" fill="#8b8b8b"/></svg>
<svg style="left:677px;top:62.5px;z-index:11;" width="21" height="21" viewBox="0 0 21 21" fill="none"><path d="M2.200 1.200v18.600" stroke="#75beff" stroke-width="2.300"/><path d="M8.200 3.200v14.600l10.800-7.300z" stroke="#75beff" stroke-width="2.200" stroke-linejoin="round"/></svg>
<svg style="left:715.5px;top:62px;z-index:11;" width="23" height="22" viewBox="0 0 23 22" fill="none"><path d="M1.800 11.600a8.900 8.900 0 0 1 17.300-2.800" stroke="#75beff" stroke-width="2.350"/><path d="M19.800 2.300v7h-7" stroke="#75beff" stroke-width="2.350"/><circle cx="10.900" cy="17.100" r="3.300" fill="#75beff"/></svg>
<svg style="left:758px;top:61.5px;z-index:11;" width="17" height="24" viewBox="0 0 17 24" fill="none"><path d="M8.300 0.800v11.600M2.300 7l6 6 6-6" stroke="#75beff" stroke-width="2.350"/><circle cx="8.300" cy="19.100" r="3.300" fill="#75beff"/></svg>
<svg style="left:797.5px;top:61.5px;z-index:11;" width="17" height="24" viewBox="0 0 17 24" fill="none"><path d="M8.300 14v-12M2.300 7.500l6-6 6 6" stroke="#75beff" stroke-width="2.350"/><circle cx="8.300" cy="19.100" r="3.300" fill="#75beff"/></svg>
<svg style="left:835px;top:62.5px;z-index:11;" width="22" height="22" viewBox="0 0 22 22" fill="none"><path d="M3.400 6.200a8.300 8.300 0 1 1-1.200 4.900" stroke="#89d185" stroke-width="2.350"/><path d="M2.600 1.300v5.900h5.900" stroke="#89d185" stroke-width="2.350"/></svg>
<svg style="left:875px;top:63px;z-index:11;" width="21" height="21" viewBox="0 0 21 21" fill="none"><rect x="2.200" y="2.100" width="16" height="16" rx="1.500" stroke="#f48771" stroke-width="2.350"/></svg>
<div style="left:1521.3px;top:140.5px;width:1px;height:560.5px;background:#2f2f2f;"></div>
<div style="left:1522px;top:140.5px;width:21px;height:281.5px;background:#464646;"></div>
<div style="left:1522px;top:169.2px;width:7px;height:29px;background:#4d6a35;"></div>
<div style="left:1522px;top:314.2px;width:21px;height:2.6px;background:#a8a8a8;"></div>
<div style="left:1522px;top:316.8px;width:7px;height:13.2px;background:#4d6a35;"></div>
<div style="left:1522px;top:373.4px;width:7px;height:15.3px;background:#5d8f7c;"></div>
<div style="left:1529px;top:373.4px;width:14px;height:15.3px;background:#66663c;"></div>
<svg style="left:0;top:0" width="1543" height="300" viewBox="0 0 1543 300"><rect x="1407.20" y="141.10" width="12.32" height="1.6" fill="#9b9b9b" opacity="0.72"/><rect x="1421.06" y="141.10" width="13.86" height="1.6" fill="#ce9178" opacity="0.72"/><rect x="1407.20" y="147.28" width="4.62" height="1.6" fill="#569cd6" opacity="0.72"/><rect x="1413.36" y="147.28" width="15.40" height="1.6" fill="#d4d4d4" opacity="0.72"/><rect x="1430.30" y="147.28" width="1.54" height="1.6" fill="#d4d4d4" opacity="0.72"/><rect x="1433.38" y="147.28" width="1.54" height="1.6" fill="#b5cea8" opacity="0.72"/><rect x="1434.92" y="147.28" width="1.54" height="1.6" fill="#d4d4d4" opacity="0.72"/><rect x="1407.20" y="153.46" width="4.62" height="1.6" fill="#569cd6" opacity="0.72"/><rect x="1413.36" y="153.46" width="6.16" height="1.6" fill="#d4d4d4" opacity="0.72"/><rect x="1419.52" y="153.46" width="3.08" height="1.6" fill="#ffd700" opacity="0.72"/><rect x="1407.20" y="156.55" width="1.54" height="1.6" fill="#ffd700" opacity="0.72"/><rect x="1413.36" y="159.64" width="9.24" height="1.6" fill="#d4d4d4" opacity="0.72"/><rect x="1422.60" y="159.64" width="1.54" height="1.6" fill="#da70d6" opacity="0.72"/><rect x="1424.14" y="159.64" width="10.78" height="1.6" fill="#ce9178" opacity="0.72"/><rect x="1436.46" y="159.64" width="1.54" height="1.6" fill="#ce9178" opacity="0.72"/><rect x="1439.54" y="159.64" width="13.86" height="1.6" fill="#ce9178" opacity="0.72"/><rect x="1453.40" y="159.64" width="1.54" height="1.6" fill="#da70d6" opacity="0.72"/><rect x="1454.94" y="159.64" width="1.54" height="1.6" fill="#d4d4d4" opacity="0.72"/><rect x="1413.36" y="165.82" width="9.24" height="1.6" fill="#d4d4d4" opacity="0.72"/><rect x="1422.60" y="165.82" width="1.54" height="1.6" fill="#da70d6" opacity="0.72"/><rect x="1424.14" y="165.82" width="26.18" height="1.6" fill="#ce9178" opacity="0.72"/><rect x="1451.86" y="165.82" width="1.54" height="1.6" fill="#ce9178" opacity="0.72"/><rect x="1454.94" y="165.82" width="9.24" height="1.6" fill="#ce9178" opacity="0.72"/><rect x="1464.18" y="165.82" width="1.54" height="1.6" fill="#d4d4d4" opacity="0.72"/><rect x="1467.26" y="165.82" width="24.64" height="1.6" fill="#c56bd8" opacity="0.72"/><rect x="1491.90" y="165.82" width="1.54" height="1.6" fill="#da70d6" opacity="0.72"/><rect x="1493.44" y="165.82" width="1.54" height="1.6" fill="#d4d4d4" opacity="0.72"/><rect x="1413.36" y="172.00" width="4.62" height="1.6" fill="#569cd6" opacity="0.72"/><rect x="1419.52" y="172.00" width="1.54" height="1.6" fill="#d4d4d4" opacity="0.72"/><rect x="1422.60" y="172.00" width="1.54" height="1.6" fill="#d4d4d4" opacity="0.72"/><rect x="1425.68" y="172.00" width="1.54" height="1.6" fill="#b5cea8" opacity="0.72"/><rect x="1427.22" y="172.00" width="1.54" height="1.6" fill="#d4d4d4" opacity="0.72"/><rect x="1430.30" y="172.00" width="1.54" height="1.6" fill="#d4d4d4" opacity="0.72"/><rect x="1433.38" y="172.00" width="1.54" height="1.6" fill="#d4d4d4" opacity="0.72"/><rect x="1436.46" y="172.00" width="1.54" height="1.6" fill="#b5cea8" opacity="0.72"/><rect x="1438.00" y="172.00" width="1.54" height="1.6" fill="#d4d4d4" opacity="0.72"/><rect x="1441.08" y="172.00" width="1.54" height="1.6" fill="#d4d4d4" opacity="0.72"/><rect x="1444.16" y="172.00" width="1.54" height="1.6" fill="#d4d4d4" opacity="0.72"/><rect x="1447.24" y="172.00" width="1.54" height="1.6" fill="#b5cea8" opacity="0.72"/><rect x="1448.78" y="172.00" width="1.54" height="1.6" fill="#d4d4d4" opacity="0.72"/><rect x="1413.36" y="175.09" width="1.54" height="1.6" fill="#d4d4d4" opacity="0.72"/><rect x="1416.44" y="175.09" width="1.54" height="1.6" fill="#d4d4d4" opacity="0.72"/><rect x="1419.52" y="175.09" width="1.54" height="1.6" fill="#b5cea8" opacity="0.72"/><rect x="1421.06" y="175.09" width="1.54" height="1.6" fill="#d4d4d4" opacity="0.72"/><rect x="1413.36" y="178.18" width="15.40" height="1.6" fill="#d4d4d4" opacity="0.72"/><rect x="1430.30" y="178.18" width="1.54" height="1.6" fill="#d4d4d4" opacity="0.72"/><rect x="1433.38" y="178.18" width="1.54" height="1.6" fill="#d4d4d4" opacity="0.72"/><rect x="1436.46" y="178.18" width="1.54" height="1.6" fill="#d4d4d4" opacity="0.72"/><rect x="1439.54" y="178.18" width="1.54" height="1.6" fill="#d4d4d4" opacity="0.72"/><rect x="1442.62" y="178.18" width="1.54" height="1.6" fill="#d4d4d4" opacity="0.72"/><rect x="1445.70" y="178.18" width="3.08" height="1.6" fill="#d4d4d4" opacity="0.72"/><rect x="1413.36" y="184.36" width="9.24" height="1.6" fill="#d4d4d4" opacity="0.72"/><rect x="1422.60" y="184.36" width="1.54" height="1.6" fill="#da70d6" opacity="0.72"/><rect x="1424.14" y="184.36" width="3.08" height="1.6" fill="#ce9178" opacity="0.72"/><rect x="1428.76" y="184.36" width="1.54" height="1.6" fill="#ce9178" opacity="0.72"/><rect x="1431.84" y="184.36" width="1.54" height="1.6" fill="#ce9178" opacity="0.72"/><rect x="1434.92" y="184.36" width="1.54" height="1.6" fill="#ce9178" opacity="0.72"/><rect x="1438.00" y="184.36" width="1.54" height="1.6" fill="#ce9178" opacity="0.72"/><rect x="1441.08" y="184.36" width="1.54" height="1.6" fill="#ce9178" opacity="0.72"/><rect x="1444.16" y="184.36" width="7.70" height="1.6" fill="#ce9178" opacity="0.72"/><rect x="1451.86" y="184.36" width="1.54" height="1.6" fill="#d4d4d4" opacity="0.72"/><rect x="1454.94" y="184.36" width="15.40" height="1.6" fill="#d4d4d4" opacity="0.72"/><rect x="1470.34" y="184.36" width="1.54" height="1.6" fill="#da70d6" opacity="0.72"/><rect x="1471.88" y="184.36" width="1.54" height="1.6" fill="#d4d4d4" opacity="0.72"/><rect x="1413.36" y="190.54" width="9.24" height="1.6" fill="#569cd6" opacity="0.72"/><rect x="1424.14" y="190.54" width="1.54" height="1.6" fill="#b5cea8" opacity="0.72"/><rect x="1425.68" y="190.54" width="1.54" height="1.6" fill="#d4d4d4" opacity="0.72"/><rect x="1407.20" y="193.63" width="1.54" height="1.6" fill="#ffd700" opacity="0.72"/><rect x="1402.600" y="146.600" width="1.800" height="6.200" fill="#587c0c"/><rect x="1402.600" y="177.500" width="1.800" height="3.100" fill="#587c0c"/><rect x="1402.600" y="183.700" width="1.800" height="3.100" fill="#1b81a8"/></svg>
<svg style="left:13.400px;top:13.800px" width="26" height="26" viewBox="0 0 100 100"><path d="M1 66L12 73.500 75 25 75 0 z" fill="#0b7fc6"/><path d="M1 34L12 26.500 75 75 75 100 z" fill="#0a8fd8"/><path d="M75 0L98 10.500 98 89.500 75 100 z" fill="#25a9f2"/></svg>
<div style="left:0px;top:273px;width:3.7px;height:73px;background:#ffffff;"></div>
<svg style="left:19px;top:71px;" width="35" height="38" viewBox="0 0 35 38" fill="none"><path d="M11.300 3.200a1.700 1.700 0 0 1 1.700-1.700h13.500l6.500 6.500v17.300a1.700 1.700 0 0 1-1.700 1.700H13a1.700 1.700 0 0 1-1.700-1.700z" stroke="#858585" stroke-width="2.250"/><path d="M26.300 1.700v6.500h6.500" stroke="#858585" stroke-width="2.250"/><path d="M11.300 10.300H3.200a1.700 1.700 0 0 0-1.700 1.700v22.800a1.700 1.700 0 0 0 1.700 1.700h17.600a1.700 1.700 0 0 0 1.700-1.700V27" stroke="#858585" stroke-width="2.250"/></svg>
<svg style="left:19px;top:144px;" width="36" height="38" viewBox="0 0 36 38" fill="none"><circle cx="22.600" cy="13.300" r="11.600" stroke="#858585" stroke-width="2"/><path d="M14.500 21.800L1.500 36.300" stroke="#858585" stroke-width="2"/></svg>
<svg style="left:21px;top:217px;" width="32" height="39" viewBox="0 0 32 39" fill="none"><circle cx="7.300" cy="5.800" r="4.500" stroke="#858585" stroke-width="2.250"/><circle cx="7.300" cy="31.800" r="4.500" stroke="#858585" stroke-width="2.250"/><circle cx="23.800" cy="12.800" r="4.500" stroke="#858585" stroke-width="2.250"/><path d="M7.300 10.300v17M23.800 17.300c0 5-4 5.800-8 6.300c-4.500 0.500-8.500 1.200-8.500 3.700" stroke="#858585" stroke-width="2.250"/></svg>
<div style="left:36.7px;top:236.6px;width:24px;height:24px;background:#007acc;border-radius:12px;"></div>
<span style="left:45.36px;top:239.10px;height:19px;line-height:19px;font-family:'Liberation Sans', sans-serif;font-size:13.5px;font-weight:700;color:#ffffff;letter-spacing:0.000px;">2</span>
<svg style="left:17px;top:289px;" width="40" height="40" viewBox="0 0 40 40" fill="none"><path d="M14.300 19.500V3.300l23.300 15.300-8.500 5.400" stroke="#ffffff" stroke-width="2.250" stroke-linejoin="round"/><path d="M6 28a5.400 5.600 0 0 1 10.800 0v5a5.400 5.400 0 0 1-10.800 0z" stroke="#ffffff" stroke-width="2.250"/><path d="M6.300 27.800h10.200M1 30.800h5M16.800 30.800h5M1.800 24.300l4.600 2.800M21 24.300l-4.600 2.800M1.800 38.300l4.800-3.400M21 38.300l-4.800-3.400" stroke="#ffffff" stroke-width="1.900"/></svg>
<div style="left:36.7px;top:309.3px;width:24px;height:24px;background:#007acc;border-radius:12px;"></div>
<span style="left:45.85px;top:311.80px;height:19px;line-height:19px;font-family:'Liberation Sans', sans-serif;font-size:13.5px;font-weight:700;color:#ffffff;letter-spacing:0.000px;">1</span>
<svg style="left:18px;top:363px;" width="39" height="38" viewBox="0 0 39 38" fill="none"><path d="M1.500 9.500h14.300v14.300H1.500zM1.500 23.800h14.300v12.700H1.500zM15.800 23.800h12.700v12.700H15.800z" stroke="#858585" stroke-width="2.250" stroke-linejoin="round"/><rect x="21.600" y="2.400" width="14.800" height="13.800" rx="1.800" stroke="#858585" stroke-width="2.250"/></svg>
<svg style="left:19px;top:440px;" width="38" height="35" viewBox="0 0 38 35" fill="none"><path d="M32.700 14V3.200a1.700 1.700 0 0 0-1.700-1.700H3.200a1.700 1.700 0 0 0-1.700 1.700v20.600a1.700 1.700 0 0 0 1.700 1.700h13.300M7.500 31.300h9" stroke="#858585" stroke-width="2.250"/><circle cx="27" cy="24.300" r="9" stroke="#858585" stroke-width="2.250"/><path d="M21.800 21l3.200 3.200-3.200 3.200M32.200 21.600l-3 2.600 3 2.600" stroke="#858585" stroke-width="1.500"/></svg>
<svg style="left:17px;top:962px;" width="40" height="40" viewBox="0 0 40 40" fill="none"><circle cx="19.500" cy="19.500" r="17.600" stroke="#858585" stroke-width="2.250"/><circle cx="19.500" cy="15" r="7.200" stroke="#858585" stroke-width="2.250"/><path d="M7.500 32.300a12.300 10.500 0 0 1 24 0" stroke="#858585" stroke-width="2.250"/></svg>
<svg style="left:16.5px;top:1035px;" width="40" height="40" viewBox="0 0 40 40" fill="none"><path d="M17.05 6.78 L17.56 1.86 L22.44 1.86 L22.95 6.78 L27.26 8.57 L31.10 5.45 L34.55 8.90 L31.43 12.74 L33.22 17.05 L38.14 17.56 L38.14 22.44 L33.22 22.95 L31.43 27.26 L34.55 31.10 L31.10 34.55 L27.26 31.43 L22.95 33.22 L22.44 38.14 L17.56 38.14 L17.05 33.22 L12.74 31.43 L8.90 34.55 L5.45 31.10 L8.57 27.26 L6.78 22.95 L1.86 22.44 L1.86 17.56 L6.78 17.05 L8.57 12.74 L5.45 8.90 L8.90 5.45 L12.74 8.57Z" stroke="#858585" stroke-width="2.6" stroke-linejoin="round"/><circle cx="20" cy="20" r="4.58" stroke="#858585" stroke-width="2.6"/></svg>
<svg style="left:18px;top:1098px;" width="16" height="22" viewBox="0 0 16 22" fill="none"><path d="M1 8.500l6 5.500-6 6.500M14.500 1l-6 5.500 6 5.500" stroke="#ffffff" stroke-width="1.500"/></svg>
<svg style="left:172px;top:1097px;" width="19" height="24" viewBox="0 0 19 24" fill="none"><circle cx="4.300" cy="4.300" r="2.900" stroke="#ffffff" stroke-width="1.500"/><circle cx="4.300" cy="19.700" r="2.900" stroke="#ffffff" stroke-width="1.500"/><circle cx="14.300" cy="7.300" r="2.900" stroke="#ffffff" stroke-width="1.500"/><path d="M4.300 7.200v9.600M14.300 10.200c0 4.500-6 3-10 7" stroke="#ffffff" stroke-width="1.500"/></svg>
<svg style="left:254px;top:1098px;" width="22" height="22" viewBox="0 0 22 22" fill="none"><path d="M3.300 9.500a8 8 0 0 1 14.800-2.800M18.700 12.500a8 8 0 0 1-14.800 2.800" stroke="#ffffff" stroke-width="1.500"/><path d="M18.600 2.200v5h-5M3.400 19.800v-5h5" stroke="#ffffff" stroke-width="1.500"/></svg>
<svg style="left:297.5px;top:1099px;" width="20" height="20" viewBox="0 0 20 20" fill="none"><circle cx="9.800" cy="9.800" r="8.600" stroke="#ffffff" stroke-width="1.500"/><path d="M6 6l7.600 7.600M13.600 6L6 13.600" stroke="#ffffff" stroke-width="1.500"/></svg>
<svg style="left:338.5px;top:1099px;" width="20" height="20" viewBox="0 0 20 20" fill="none"><path d="M9.800 1.800L18.600 18H1z" stroke="#ffffff" stroke-width="1.500" stroke-linejoin="round"/><path d="M9.800 7v6" stroke="#ffffff" stroke-width="1.600"/><circle cx="9.800" cy="15.300" r="1" fill="#ffffff"/></svg>
<svg style="left:400.5px;top:1098px;" width="21" height="22" viewBox="0 0 21 22" fill="none"><path d="M10.300 9.500L5 20.500M10.300 9.500l5.300 11M7.300 16h6" stroke="#ffffff" stroke-width="1.400"/><circle cx="10.300" cy="7.800" r="1.800" stroke="#ffffff" stroke-width="1.300"/><path d="M5.800 3.500a6.500 6.500 0 0 0 0 9M14.800 3.500a6.500 6.500 0 0 1 0 9M2.800 1a10 10 0 0 0 0 13.500M17.800 1a10 10 0 0 1 0 13.500" stroke="#ffffff" stroke-width="1.400"/></svg>
<svg style="left:458px;top:1097px;" width="23" height="24" viewBox="0 0 23 24" fill="none"><path d="M7.500 10.500V1.800l13.300 8.700-5 3.200" stroke="#ffffff" stroke-width="1.500" stroke-linejoin="round"/><path d="M3.500 15a3.200 3.700 0 0 1 6.400 0v4a3.200 3.200 0 0 1-6.400 0z" stroke="#ffffff" stroke-width="1.400"/><path d="M3.700 14.500h6M0.500 16.500h3M10 16.500h3M0.500 20h3M10 20h3M1.500 13l2 1.500M12 13l-2 1.500M1.500 23l2-2M12 23l-2-2" stroke="#ffffff" stroke-width="1.200"/></svg>
<svg style="left:1499.9px;top:1096.7px;" width="22" height="24" viewBox="0 0 22 24" fill="none"><path d="M1.300 17.200H17.200M2 17.200L3.400 13.200V9.200A5.700 5.700 0 0 1 9.700 3.100M14.700 11.800V13.200L16.600 17.200" stroke="#ffffff" stroke-width="1.600" stroke-linejoin="round"/><path d="M6 17.600a2.800 2.800 0 0 0 5.600 0z" fill="#ffffff"/><circle cx="14.200" cy="6.200" r="4.200" fill="#ffffff"/></svg>
<svg style="left:1377.5px;top:760.5px;" width="23" height="23" viewBox="0 0 23 23" fill="none"><path d="M2.500 2l4.500 1.500 1 3 5 5M2.500 2l1.500 4.500 3 1M13 11.500l7.500 7.500a1.600 1.600 0 0 1-2.300 2.300L10.700 13.800" stroke="#cccccc" stroke-width="1.500" stroke-linejoin="round"/><path d="M12 9a5 5 0 0 1 6.500-6.500l-3.200 3.200 0.600 2.400 2.400 0.600 3.200-3.200A5 5 0 0 1 15 12l-0.800 0.200M9.500 12.500L2.200 19.800a1.600 1.600 0 0 0 2.300 2.300l7-7" stroke="#cccccc" stroke-width="1.500" stroke-linejoin="round"/></svg>
<svg style="left:1377.5px;top:794px;" width="23" height="23" viewBox="0 0 23 23" fill="none"><path d="M2.500 2l4.500 1.500 1 3 5 5M2.500 2l1.500 4.500 3 1M13 11.500l7.500 7.500a1.600 1.600 0 0 1-2.300 2.300L10.700 13.800" stroke="#cccccc" stroke-width="1.500" stroke-linejoin="round"/><path d="M12 9a5 5 0 0 1 6.500-6.500l-3.200 3.200 0.600 2.400 2.400 0.600 3.200-3.200A5 5 0 0 1 15 12l-0.800 0.200M9.500 12.500L2.200 19.800a1.600 1.600 0 0 0 2.300 2.300l7-7" stroke="#cccccc" stroke-width="1.500" stroke-linejoin="round"/></svg>
<svg style="left:1376.5px;top:826px;" width="25" height="26" viewBox="0 0 25 26" fill="none"><path d="M6 10.500a6.500 6.500 0 0 1 13 0v6.500a6.500 6.500 0 0 1-13 0z" stroke="#cccccc" stroke-width="1.500"/><path d="M8.500 5.500a4 4 0 0 1 8 0" stroke="#cccccc" stroke-width="1.500"/><path d="M0.500 14h5.500M19 14h5.500M2.500 6l4 3M22.500 6l-4 3M2.500 24l4-3.500M22.500 24l-4-3.500M9.500 11l6 6M15.500 11l-6 6" stroke="#cccccc" stroke-width="1.500"/></svg>
<svg style="left:1506px;top:761px;" width="20" height="20" viewBox="0 0 20 20" fill="none"><path d="M0.800 12.500l5.700 5.700L18.800 3.300" stroke="#b0b0b0" stroke-width="1.500"/></svg>
<svg style="left:1506px;top:794.5px;" width="20" height="20" viewBox="0 0 20 20" fill="none"><path d="M0.800 12.500l5.700 5.700L18.800 3.300" stroke="#b0b0b0" stroke-width="1.500"/></svg>
</div></div><div id="edge"></div>
</body></html>
